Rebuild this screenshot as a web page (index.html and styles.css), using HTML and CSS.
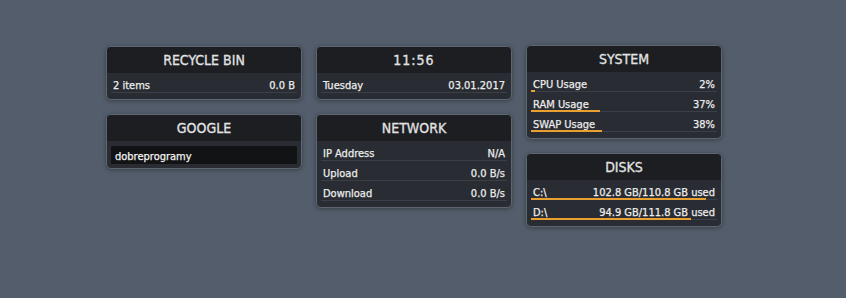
FILE: index.html
```html
<!DOCTYPE html>
<html lang="en">
<head>
    <meta charset="UTF-8">
    <title>Desktop Widgets</title>
    <link rel="stylesheet" href="styles.css">
</head>
<body>
    <div class="board">
        <div class="column">
            <div class="widget">
                <div class="widget-title">Recycle Bin</div>
                <div class="widget-body">
                    <div class="row"><span>2 items</span><span>0.0 B</span></div>
                </div>
            </div>
            <div class="widget">
                <div class="widget-title">Google</div>
                <div class="widget-body search-body">
                    <div class="search-box">dobreprogramy</div>
                </div>
            </div>
        </div>

        <div class="column">
            <div class="widget">
                <div class="widget-title clock">11:56</div>
                <div class="widget-body">
                    <div class="row"><span>Tuesday</span><span>03.01.2017</span></div>
                </div>
            </div>
            <div class="widget">
                <div class="widget-title">Network</div>
                <div class="widget-body">
                    <div class="row"><span>IP Address</span><span>N/A</span></div>
                    <div class="row"><span>Upload</span><span>0.0 B/s</span></div>
                    <div class="row"><span>Download</span><span>0.0 B/s</span></div>
                </div>
            </div>
        </div>

        <div class="column column-up">
            <div class="widget">
                <div class="widget-title">System</div>
                <div class="widget-body">
                    <div class="row"><span>CPU Usage</span><span>2%</span><div class="bar" style="width: 2%"></div></div>
                    <div class="row"><span>RAM Usage</span><span>37%</span><div class="bar" style="width: 37%"></div></div>
                    <div class="row"><span>SWAP Usage</span><span>38%</span><div class="bar" style="width: 38%"></div></div>
                </div>
            </div>
            <div class="widget">
                <div class="widget-title">Disks</div>
                <div class="widget-body">
                    <div class="row"><span>C:\</span><span>102.8 GB/110.8 GB used</span><div class="bar" style="width: 94%"></div></div>
                    <div class="row"><span>D:\</span><span>94.9 GB/111.8 GB used</span><div class="bar" style="width: 86%"></div></div>
                </div>
            </div>
        </div>
    </div>
</body>
</html>
```

FILE: styles.css
```css
* {
    box-sizing: border-box;
}

body {
    margin: 0;
    min-height: 100vh;
    background-color: #535d6b;
    font-family: 'DejaVu Sans Condensed', 'DejaVu Sans', sans-serif;
    color: #dcdcdc;
}

.board {
    display: flex;
    align-items: flex-start;
    gap: 14px;
    padding: 46px 0 0 106px;
}

.column {
    display: flex;
    flex-direction: column;
    gap: 14px;
    width: 196px;
}

.column-up {
    margin-top: -1px;
}

.widget {
    background-color: #292c32;
    border: 1px solid #5d6672;
    border-radius: 5px;
    box-shadow: 0 1px 4px rgba(0, 0, 0, 0.35);
    overflow: hidden;
}

.widget-title {
    height: 26px;
    line-height: 27px;
    background-color: #1c1e22;
    text-align: center;
    text-transform: uppercase;
    font-size: 14px;
    color: #e2e2e2;
    -webkit-text-stroke: 0.3px #e2e2e2;
}

.widget-title.clock {
    letter-spacing: 1px;
}

.widget-body {
    padding: 0 4px 6px 4px;
}

.row {
    position: relative;
    display: flex;
    justify-content: space-between;
    height: 20px;
    padding: 6px 2px 0 2px;
    border-bottom: 1px solid #3b3f47;
    font-size: 11px;
    line-height: 13px;
    color: #ececec;
    -webkit-text-stroke: 0.25px #ececec;
}

.bar {
    position: absolute;
    left: 0;
    bottom: -1px;
    height: 2px;
    background-color: #e8a030;
}

.search-body {
    padding: 5px 4px 4px 4px;
}

.search-box {
    height: 18px;
    line-height: 19px;
    padding: 1px 4px 0 4px;
    background-color: #121314;
    font-size: 11px;
    color: #f2f2f2;
    -webkit-text-stroke: 0.25px #f2f2f2;
}
```
